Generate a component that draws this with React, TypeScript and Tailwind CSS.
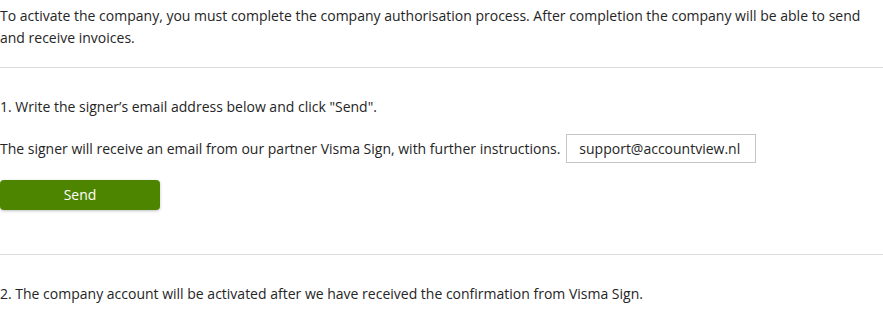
import * as React from "react";

export default function App() {
  return (
    <div
      className="w-[883px] bg-white text-[14px] leading-[22px] text-[#252525]"
      style={{ fontFamily: '"Open Sans", "Noto Sans", sans-serif' }}
    >
      <p className="pt-[5px]">
        To activate the company, you must complete the company authorisation process. After completion the company
        will be able to send and receive invoices.
      </p>
      <hr className="mt-[18px] border-t border-[#dcdcdc]" />
      <section className="pt-[28px]">
        <p>1. Write the signer’s email address below and click "Send".</p>
        <div className="mt-[16px] flex items-center gap-[6px]">
          <span>The signer will receive an email from our partner Visma Sign, with further instructions.</span>
          <input
            type="text"
            defaultValue="support@accountview.nl"
            className="h-[29px] w-[190px] border border-[#c6c6c6] px-[12px] text-[14px] text-[#252525] outline-none"
          />
        </div>
        <button className="mt-[17px] h-[30px] w-[160px] rounded-[4px] bg-[#4e8500] text-[14px] font-medium text-white shadow-[0_1px_3px_rgba(0,0,0,0.25)]">
          Send
        </button>
      </section>
      <hr className="mt-[44px] border-t border-[#dcdcdc]" />
      <p className="pt-[28px]">
        2. The company account will be activated after we have received the confirmation from Visma Sign.
      </p>
    </div>
  );
}
